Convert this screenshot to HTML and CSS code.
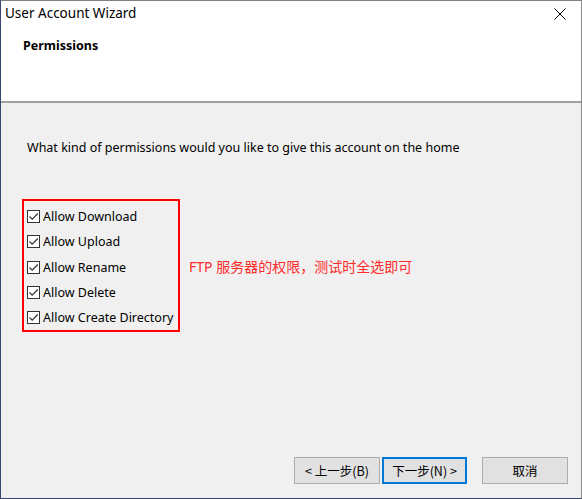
FILE: index.html
```html
<!DOCTYPE html>
<html>
<head>
<meta charset="utf-8">
<link rel="stylesheet" href="styles.css">
</head>
<body>
<div class="window">
  <div class="titlebar">
    <span class="title">User Account Wizard</span>
    <span class="close"><svg width="12" height="12" viewBox="0 0 12 12"><path d="M0.5 0.5 L11.5 11.5 M11.5 0.5 L0.5 11.5" stroke="#000" stroke-width="1" fill="none"/></svg></span>
  </div>
  <div class="header">
    <div class="heading">Permissions</div>
  </div>
  <div class="body">
    <p class="question">What kind of permissions would you like to give this account on the home</p>
    <div class="perm-area">
      <div class="perm-box">
        <label class="perm"><span class="cb"><svg width="11" height="11" viewBox="0 0 11 11"><path d="M1.5 5.5 L4.2 8.2 L9.8 2.5" stroke="#333" stroke-width="1.2" fill="none"/></svg></span>Allow Download</label>
        <label class="perm"><span class="cb"><svg width="11" height="11" viewBox="0 0 11 11"><path d="M1.5 5.5 L4.2 8.2 L9.8 2.5" stroke="#333" stroke-width="1.2" fill="none"/></svg></span>Allow Upload</label>
        <label class="perm"><span class="cb"><svg width="11" height="11" viewBox="0 0 11 11"><path d="M1.5 5.5 L4.2 8.2 L9.8 2.5" stroke="#333" stroke-width="1.2" fill="none"/></svg></span>Allow Rename</label>
        <label class="perm"><span class="cb"><svg width="11" height="11" viewBox="0 0 11 11"><path d="M1.5 5.5 L4.2 8.2 L9.8 2.5" stroke="#333" stroke-width="1.2" fill="none"/></svg></span>Allow Delete</label>
        <label class="perm"><span class="cb"><svg width="11" height="11" viewBox="0 0 11 11"><path d="M1.5 5.5 L4.2 8.2 L9.8 2.5" stroke="#333" stroke-width="1.2" fill="none"/></svg></span>Allow Create Directory</label>
      </div>
      <div class="note">FTP 服务器的权限，测试时全选即可</div>
    </div>
    <div class="spacer"></div>
    <div class="buttons">
      <button class="btn">&lt; 上一步(B)</button>
      <button class="btn primary">下一步(N) &gt;</button>
      <button class="btn cancel">取消</button>
    </div>
  </div>
</div>
</body>
</html>
```

FILE: styles.css
```css
html, body {
  margin: 0;
  padding: 0;
  background: #f0f0f0;
}
.window {
  box-sizing: border-box;
  width: 582px;
  height: 499px;
  border-top: 1px solid #808080;
  border-right: 1px solid #8a8a8a;
  border-left: 1px solid #3a4670;
  border-bottom: 1px solid #3a4670;
  display: flex;
  flex-direction: column;
  font-family: "Noto Sans", "Noto Sans CJK SC", sans-serif;
  color: #000;
}
.titlebar {
  height: 29px;
  background: #fff;
  display: flex;
  align-items: center;
  justify-content: space-between;
  padding: 0 15px 0 4px;
}
.title {
  font-size: 13.5px;
  position: relative;
  top: -3px;
}
.close {
  display: flex;
  position: relative;
  top: -2px;
}
.header {
  height: 71px;
  background: #fff;
  border-bottom: 2px solid #a0a0a0;
  padding-left: 22px;
}
.heading {
  font-weight: bold;
  font-size: 12.5px;
  margin-top: 7px;
}
.body {
  flex: 1;
  display: flex;
  flex-direction: column;
  background: #f0f0f0;
}
.question {
  margin: 36px 0 0 26px;
  font-size: 12.5px;
}
.perm-area {
  display: flex;
  align-items: center;
  margin-top: 43px;
  margin-left: 21px;
}
.perm-box {
  border: 2px solid #ff0000;
  width: 154px;
  height: 126px;
  box-sizing: content-box;
  display: flex;
  flex-direction: column;
  padding-top: 3px;
}
.perm {
  display: flex;
  align-items: center;
  height: 25.5px;
  font-size: 12.5px;
  padding-left: 3px;
}
.cb {
  box-sizing: border-box;
  width: 13px;
  height: 13px;
  border: 1px solid #333;
  background: #fff;
  display: flex;
  align-items: center;
  justify-content: center;
  margin-right: 3px;
}
.note {
  color: #ff2a2a;
  font-size: 14px;
  margin-left: 9px;
  margin-top: 1px;
}
.spacer {
  flex: 1;
}
.buttons {
  display: flex;
  padding: 0 13px 14px 0;
  justify-content: flex-end;
}
.btn {
  box-sizing: border-box;
  width: 86px;
  height: 27px;
  background: #e1e1e1;
  border: 1px solid #adadad;
  font-family: "Noto Sans CJK SC", "Noto Sans", sans-serif;
  font-size: 12.5px;
  color: #000;
  padding: 0;
  margin: 0;
}
.primary {
  border: 2px solid #0078d7;
  margin-left: 2px;
  width: 85px;
}
.cancel {
  margin-left: 15px;
}
```
